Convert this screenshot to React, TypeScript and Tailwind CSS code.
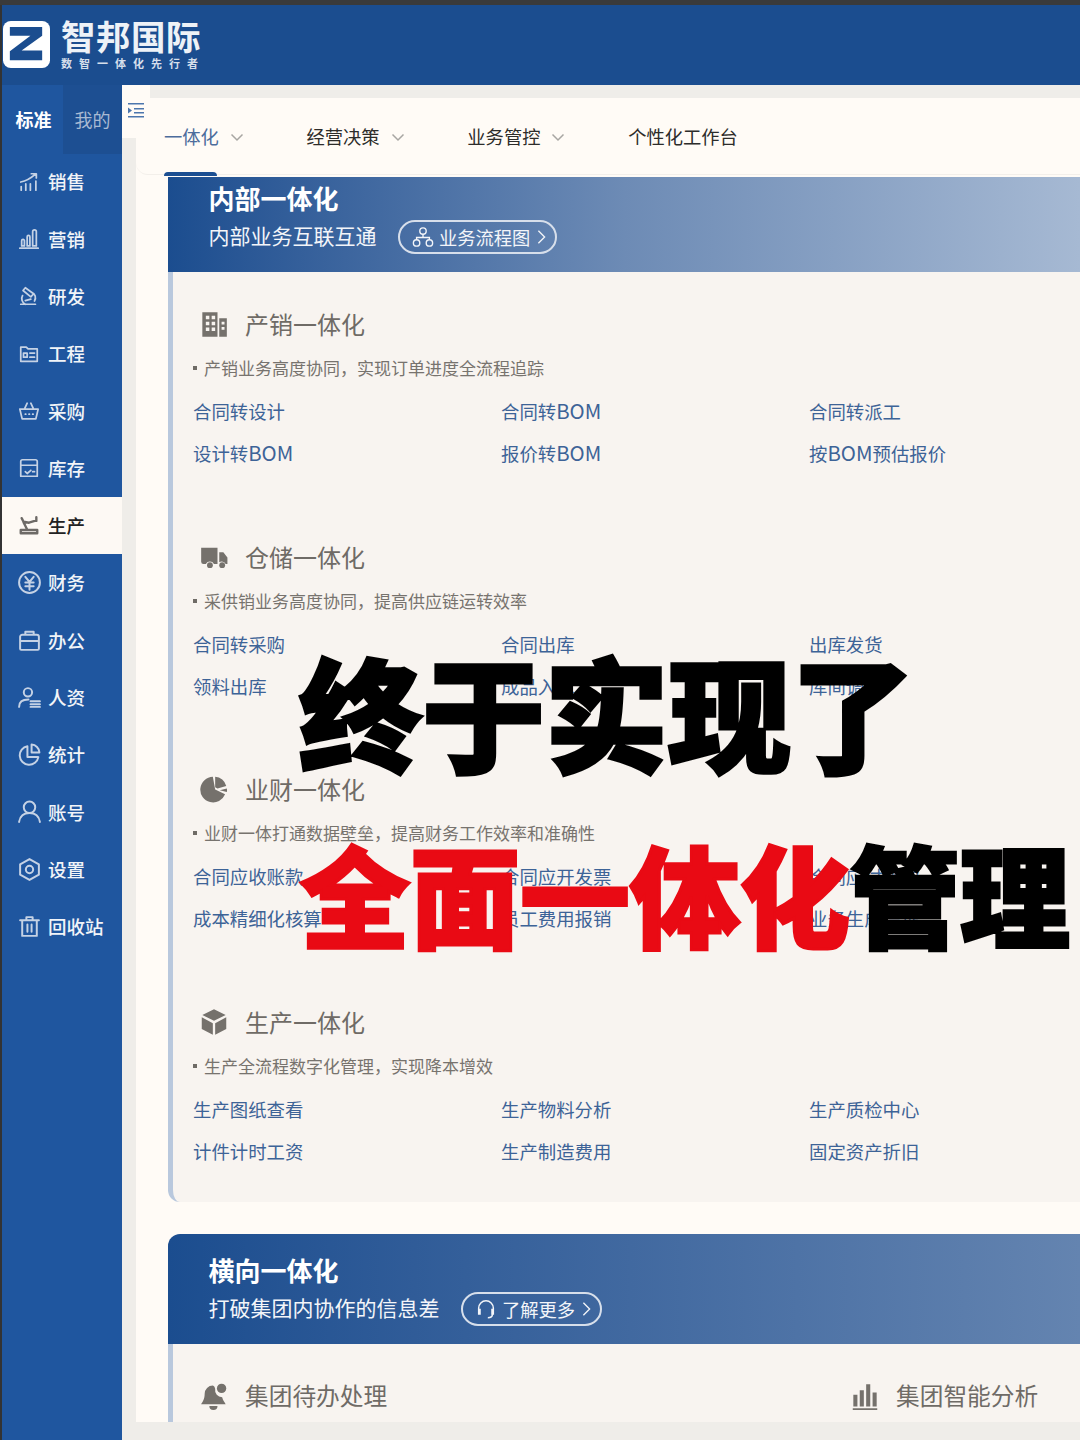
import type {ReactNode} from "react";

function Ico({size = 22, sw = 1.9, children, fill = "none"}: {size?: number, sw?: number, children: ReactNode, fill?: string}) {
    return (
        <svg viewBox="0 0 24 24" width={size} height={size} fill={fill} stroke={fill === "none" ? "currentColor" : "none"}
             strokeWidth={sw} strokeLinecap="round" strokeLinejoin="round" className="shrink-0">
            {children}
        </svg>
    );
}

const navItems: {label: string, active?: boolean, icon: ReactNode}[] = [
    {label: "销售", icon: <Ico><path d="M3.500 21v-4M8.500 21v-7M13.500 21v-7M19.500 21V11M3 12c6-1 11-4 16-8.500M14.500 3h5.500v4.500"/></Ico>},
    {label: "营销", icon: <Ico><path d="M2 22h20M4 19.500V14a1.500 1.500 0 013 0v5.500zM10 19.500V9.500a1.500 1.500 0 013 0v10zM16 19.500V4a2 2 0 014 0v15.500z"/></Ico>},
    {label: "研发", icon: <Ico><path d="M3 21h16M8 21c-3.500-2-5-6-3-9.500M8 3l9 6.500-3 3.500-8.500-7zM15 8c4 1.500 5 6 3 9.500M8 17l6-1.500"/></Ico>},
    {label: "工程", icon: <Ico><path d="M3 4.500h6l2 2h10V20H3zM13 11h5M13 15.500h5M6 11h4v4.500H6z"/></Ico>},
    {label: "采购", icon: <Ico><path d="M2 10h20l-2.500 10.500h-15zM7 10l3-6.500M17 10l-3-6.500M8 15.500h.5M12 15.500h.5M16 15.500h.5"/></Ico>},
    {label: "库存", icon: <Ico><path d="M3 5a2 2 0 012-2h14a2 2 0 012 2v16H3zM3 9h18M8 16l2 2 4-3.500M16 16h2"/></Ico>},
    {label: "生产", active: true, icon: <Ico sw={2.6}><path d="M3 21h18v-3.500H3zM4 4.500l2 4 6 1 8-2.500M20 3.500v4M6 9l4 8"/></Ico>},
    {label: "财务", icon: <Ico size={25}><circle cx="12" cy="12" r="10"/><path d="M8 6.500l4 5 4-5M8 12h8M8 15.500h8M12 11.500V19"/></Ico>},
    {label: "办公", icon: <Ico size={25}><path d="M3 8.500a2 2 0 012-2h14a2 2 0 012 2V20a1 1 0 01-1 1H4a1 1 0 01-1-1zM8 6.500V3.500h8v3M3 12.500h18"/></Ico>},
    {label: "人资", icon: <Ico size={25}><circle cx="10.500" cy="7" r="4"/><path d="M2 21c0-5 4-7 9-7M13 15.500h9M13 18.500h9M13 21h9"/></Ico>},
    {label: "统计", icon: <Ico size={25}><path d="M10 4a9 9 0 1010.500 10.500H10zM14 2.500a8 8 0 017.500 7.500H14z"/></Ico>},
    {label: "账号", icon: <Ico size={25}><circle cx="12" cy="8" r="5.500"/><path d="M2 22c1-6 5-8.500 10-8.500s9 2.500 10 8.500"/></Ico>},
    {label: "设置", icon: <Ico size={25}><path d="M12 2l9 5v10l-9 5-9-5V7z"/><circle cx="12" cy="12" r="3.500"/></Ico>},
    {label: "回收站", icon: <Ico size={25}><path d="M5 6h14v15H5zM3 6h18M9 6V3h6v3M10 10v7M14 10v7"/></Ico>},
];

const BuildingIcon = <Ico size={28} fill="#75716c"><path fillRule="evenodd" d="M2 2h13v21H2zM5 5v3h3V5zM10 5v3h3V5zM5 10v3h3v-3zM10 10v3h3v-3zM5 15v3h3v-3zM10 15v3h3v-3zM16.500 7H23v16h-6.500zM18.500 10v2.500H21V10zM18.500 14.500V17H21v-2.500z"/></Ico>;
const TruckIcon = <Ico size={28} fill="#75716c"><path d="M1 4h14v14h-3a4 4 0 00-7 0H3a2 2 0 01-2-2zM16.500 8H20l3.500 4.500V18h-1.500a4 4 0 00-5.500-1.500z"/><circle cx="8.500" cy="19" r="2.500"/><circle cx="19" cy="19" r="2.500"/></Ico>;
const PieIcon = <Ico size={28} fill="#75716c"><path d="M11 1.500a11 11 0 1010.500 15L13 12.500zM13 1.500a10.500 10.500 0 019.500 8L15 11.500l-2-1zM23 11.500c.2 1 .2 2 0 3l-6-1.500z"/></Ico>;
const BoxIcon = <Ico size={28} fill="#75716c"><path d="M12 1l10 5-10 5L2 6zM1.500 8l9.500 5v10L1.500 18zM22.500 8v10L13 23V13z"/></Ico>;
const BellIcon = <Ico size={28} fill="#75716c"><path d="M11 3a7 7 0 00-7 7c0 5-2 7-3 9h21c-1-2-2.500-3.500-3-6a6 6 0 01-6-7c0-1-1-3-2-3zM8 20.500h7a3.500 3.500 0 01-7 0z"/><circle cx="18.500" cy="5.500" r="4"/></Ico>;
const BarsIcon = <Ico size={28} fill="#75716c"><path d="M2 11h3.500v10H2zM7.500 7H11v14H7.500zM13 2h3.500v19H13zM18.500 9H22v12h-3.500zM1.500 22.500h21V24h-21z"/></Ico>;

const sections = [
    {
        icon: BuildingIcon, title: "产销一体化", desc: "产销业务高度协同，实现订单进度全流程追踪",
        links: ["合同转设计", "合同转BOM", "合同转派工", "设计转BOM", "报价转BOM", "按BOM预估报价"],
    },
    {
        icon: TruckIcon, title: "仓储一体化", desc: "采供销业务高度协同，提高供应链运转效率",
        links: ["合同转采购", "合同出库", "出库发货", "领料出库", "成品入库", "库间调拨"],
    },
    {
        icon: PieIcon, title: "业财一体化", desc: "业财一体打通数据壁垒，提高财务工作效率和准确性",
        links: ["合同应收账款", "合同应开发票", "合同应付账款", "成本精细化核算", "员工费用报销", "业务生成凭证"],
    },
    {
        icon: BoxIcon, title: "生产一体化", desc: "生产全流程数字化管理，实现降本增效",
        links: ["生产图纸查看", "生产物料分析", "生产质检中心", "计件计时工资", "生产制造费用", "固定资产折旧"],
    },
];

const tabs = [
    {label: "一体化", chevron: true, active: true},
    {label: "经营决策", chevron: true},
    {label: "业务管控", chevron: true},
    {label: "个性化工作台", chevron: false},
];

function Chevron({className}: {className: string}) {
    return (
        <svg viewBox="0 0 16 16" width="16" height="16" fill="none" stroke="currentColor" strokeWidth="1.5" className={className}>
            <path d="M2.500 5.500L8 11l5.500-5.500"/>
        </svg>
    );
}

function Sidebar() {
    return (
        <aside className="w-[122px] shrink-0 border-l-2 border-[#333333] bg-[#1f569f] text-[#f1f4f8]">
            <div className="flex h-[69px]">
                <div className="flex w-[61px] items-center justify-center text-[18px] font-bold text-white pb-[1px] pl-[2px]">标准</div>
                <div className="flex flex-1 items-center justify-center bg-[#1d4f92] text-[18px] text-[#a9bad3] pb-[1px]">我的</div>
            </div>
            <div className="-mt-[1px] flex flex-col">
                {navItems.map((item) => (
                    <div key={item.label}
                         className={`flex h-[57.3px] items-center ${item.active ? "bg-[#fdf9f4] text-[#222222]" : ""}`}>
                        <div className={`flex w-[46px] justify-center pl-[8px] ${item.active ? "text-[#6d6a66]" : "text-[#c5d2e5]"}`}>
                            {item.icon}
                        </div>
                        <span className="whitespace-nowrap text-[18.500px] font-medium leading-none">{item.label}</span>
                    </div>
                ))}
            </div>
        </aside>
    );
}

function CardHeader({title, sub, pill, icon, className, gradient}: {
    title: string, sub: string, pill: string, icon: ReactNode, className: string, gradient: string
}) {
    return (
        <div className={`flex flex-col pl-[40.500px] text-[#f3f5f9] ${gradient} ${className}`}>
            <div className="text-[26px] font-bold leading-[34px] text-white">{title}</div>
            <div className="mt-[4px] flex items-start">
                <span className="text-[21px] leading-[32px]">{sub}</span>
                <span className="ml-[21.500px] mt-[1px] flex h-[34px] items-center rounded-full border-2 border-[#d7dfeb] pl-[12px] pr-[9px] text-[18.300px]">
                    {icon}
                    <span className="ml-[5px] leading-none">{pill}</span>
                    <svg viewBox="0 0 10 18" width="9" height="16" fill="none" stroke="currentColor" strokeWidth="1.5" className="ml-[7px]">
                        <path d="M1.500 2l7 7-7 7"/>
                    </svg>
                </span>
            </div>
        </div>
    );
}

function LinkText({text}: {text: string}) {
    // the latin part runs wider than the CJK font's own BOM
    return (
        <>
            {text.split(/(BOM)/).map((part, i) => part === "BOM"
                ? <span key={i} className="text-[20.400px] leading-none">{part}</span>
                : <span key={i}>{part}</span>)}
        </>
    );
}

function Section({section}: {section: typeof sections[number]}) {
    return (
        <div className="h-[232.500px] pt-[36px]">
            <div className="flex h-[32px] items-center pl-[7px] text-[#6f6b66]">
                {section.icon}
                <span className="ml-[17px] text-[24px] leading-none">{section.title}</span>
            </div>
            <div className="mt-[16px] flex h-[24px] items-center text-[17px] text-[#77736e]">
                <span className="mr-[7px] h-[4px] w-[4px] bg-[#6f6b66]"/>
                {section.desc}
            </div>
            <div className="mt-[11px] grid grid-cols-[308px_308px_1fr]">
                {section.links.map((link) => (
                    <div key={link} className="flex h-[42px] items-center text-[18.400px] text-[#3d6397]">
                        <div><LinkText text={link}/></div>
                    </div>
                ))}
            </div>
        </div>
    );
}

function Panel() {
    return (
        <div className="flex min-h-0 flex-1 flex-col overflow-hidden bg-[#fffbf6]">
            <div className="flex h-[77px] shrink-0 gap-[61.700px] pl-[28px] rounded-bl-xl border-b border-[#f3efea]">
                {tabs.map((tab) => (
                    <div key={tab.label} className="relative flex items-center pt-[1px] text-[18.300px]">
                        <span className={tab.active ? "text-[#4c6c9c]" : "text-[#2d2c2a]"}>{tab.label}</span>
                        {tab.chevron && <Chevron className="ml-[10px] text-[#a8a6a2]"/>}
                        {tab.active && <span className="absolute bottom-[-2px] left-0 h-[4px] w-[53px] rounded-t-sm bg-[#1c4f92]"/>}
                    </div>
                ))}
            </div>
            <div className="flex min-h-0 flex-1 flex-col pl-[32px] pt-[2px]">
                <CardHeader title="内部一体化" sub="内部业务互联互通" pill="业务流程图"
                            gradient="bg-gradient-to-r from-[#1b4d8f] via-[#6d8bb5] to-[#a6b9d3]"
                            className="h-[95px] shrink-0 pt-[4px]"
                            icon={<svg viewBox="0 0 24 24" width="22" height="22" fill="none" stroke="currentColor" strokeWidth="1.5"><circle cx="12" cy="5.500" r="3.500"/><circle cx="5" cy="18.500" r="3.500"/><circle cx="19" cy="18.500" r="3.500"/><path d="M12 9v3.500M5 15v-2.500h14V15"/></svg>}/>
                <div className="h-[930px] shrink-0 rounded-bl-xl border-l-[5px] border-[#b9c8dd] bg-[#f8f4f0] pl-[20px]">
                    {sections.map((section) => <Section key={section.title} section={section}/>)}
                </div>
                <CardHeader title="横向一体化" sub="打破集团内协作的信息差" pill="了解更多"
                            gradient="bg-gradient-to-r from-[#1b4d8f] to-[#6484b0]"
                            className="mt-[32px] h-[110px] shrink-0 rounded-tl-xl pt-[19px]"
                            icon={<svg viewBox="0 0 24 24" width="22" height="22" fill="none" stroke="currentColor" strokeWidth="1.6"><path d="M4 15v-4a8 8 0 0116 0v4M4 12.500h1.500v5H4zM18.500 12.500H20v5h-1.500zM19 18c0 2-2 3.500-5 3.500"/></svg>}/>
                <div className="min-h-0 flex-1 border-l-[5px] border-[#b9c8dd] bg-[#f8f4f0] pl-[27px] pt-[36px] text-[#6f6b66]">
                    <div className="flex h-[32px] items-center">
                        <div className="flex w-[651px] items-center">
                            {BellIcon}
                            <span className="ml-[17px] text-[23.700px] leading-none">集团待办处理</span>
                        </div>
                        {BarsIcon}
                        <span className="ml-[17px] text-[23.700px] leading-none">集团智能分析</span>
                    </div>
                </div>
            </div>
        </div>
    );
}

export default function App() {
    return (
        <div className="relative flex h-[1440px] w-[1080px] flex-col overflow-hidden bg-[#efede9] font-['Noto_Sans_CJK_SC','Liberation_Sans',sans-serif]">
            <div className="h-[5px] shrink-0 bg-[#3a3a3a]"/>
            <header className="flex h-[80px] shrink-0 items-center border-l-2 border-[#333333] bg-[#1b4d8f] pl-[1px]">
                <svg viewBox="0 0 48 48" width="47" height="47" className="mb-[1px] shrink-0">
                    <rect x="0" y="0" width="48" height="48" rx="8" fill="#ffffff"/>
                    <path d="M7 6h33v9L19 30h21v10H7v-9l21-16H7z" fill="#1b4d8f"/>
                </svg>
                <div className="ml-[11px] pb-[4px] text-white">
                    <div className="text-[34.500px] font-bold leading-[38px] tracking-[0.5px] text-[#eef2f7]">智邦国际</div>
                    <div className="mt-[2px] text-[11px] font-bold leading-[14px] tracking-[7px] text-[#d6dfeb]">数智一体化先行者</div>
                </div>
            </header>
            <div className="flex min-h-0 flex-1">
                <Sidebar/>
                <main className="relative flex min-w-0 flex-1 flex-col pb-[18px] pl-[14px] pt-[13px]">
                    <div className="absolute left-0 top-0 flex h-[53px] w-[28px] items-start justify-center rounded-br-sm bg-[#fffbf6] pt-[17px] text-[#4c76ad]">
                        <svg viewBox="0 0 16 16" width="16" height="16" fill="currentColor">
                            <path d="M0 1h16v1.500H0zM6 6h10v1.500H6zM6 10h10v1.500H6zM0 14h16v1.500H0zM0 5.500L4 8.500 0 11.500z"/>
                        </svg>
                    </div>
                    <Panel/>
                </main>
            </div>
            <div className="absolute left-[299px] top-[642px] whitespace-nowrap text-[123px] font-black leading-[135px] text-black [-webkit-text-stroke:3.5px_#000000]">终于实现了</div>
            <div className="absolute left-[300px] top-[826.500px] whitespace-nowrap text-[110px] font-black leading-[130px] text-black [-webkit-text-stroke:3px_#000000]">
                <span className="text-[#e90a14] [-webkit-text-stroke:3px_#e90a14]">全面一体化</span>管理
            </div>
        </div>
    );
}
